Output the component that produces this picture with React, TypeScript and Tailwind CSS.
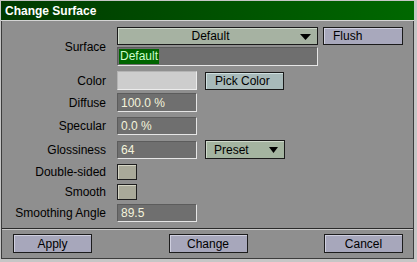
import React from "react";

const font = { fontFamily: '"Liberation Sans", Arial, sans-serif' };

function Label({ children }: { children: React.ReactNode }) {
  return <div className="w-[104px] shrink-0 text-right text-[12px] leading-[14px] text-black">{children}</div>;
}

function Field({ value, h = "h-[19px]" }: { value: string; h?: string }) {
  return (
    <div className={`ml-[11px] w-[80px] ${h} bg-[#6f6f6f] border-t border-l border-[#5c5c5c] border-r border-b border-r-[#e6e6e6] border-b-[#e6e6e6] flex items-center pl-[3px] text-[12px] text-[#f4f4dc]`}>
      {value}
    </div>
  );
}

function Tri({ w = 11, h = 6 }: { w?: number; h?: number }) {
  return (
    <svg width={w} height={h} viewBox={`0 0 ${w} ${h}`}>
      <polygon points={`0,0 ${w},0 ${w / 2},${h}`} fill="#000" />
    </svg>
  );
}

function Check() {
  return (
    <div className="ml-[11px] w-[20px] h-[16px] bg-[#a9a999] border border-[#1e1e1e] shadow-[inset_1px_1px_0_#d4d4c4]" />
  );
}

function Btn({ children }: { children: React.ReactNode }) {
  return (
    <div className="w-[79px] h-[19px] bg-[#a7a7bb] border border-[#1c1c1c] shadow-[inset_1px_1px_0_#cfcfdf] flex items-center justify-center text-[12px] text-black">
      {children}
    </div>
  );
}

export default function App() {
  return (
    <div style={font} className="w-[417px] h-[262px] bg-[#c6c6c6] pl-[1px] pt-[1px] pr-[3px] pb-[3px] flex flex-col">
      <div className="h-[19px] bg-gradient-to-r from-[#003a00] to-[#006800] flex items-center pl-[4px] text-white font-bold text-[12px]">
        Change Surface
      </div>
      <div className="h-[1px] bg-[#d4d4d4]" />
      <div className="flex-1 flex flex-col border-l border-r border-b border-[#3c3c3c]">
        <div className="bg-[#8f8f8f] border-t border-[#8f8f8f] pt-[5px] pb-[6px] border-b border-b-[#2a2a2a] flex flex-col">
          {/* Surface */}
          <div className="flex items-center">
            <Label>Surface</Label>
            <div className="ml-[11px] flex flex-col">
              <div className="w-[201px] h-[18px] bg-[#a6b2a2] border border-[#1a1a1a] shadow-[inset_1px_1px_0_#cfd9cb] flex items-center relative text-[12px] text-black">
                <div className="flex-1 text-center pr-[14px]">Default</div>
                <div className="absolute right-[6px] top-[6px]"><Tri w={11} h={6} /></div>
              </div>
              <div className="mt-[2px] w-[201px] h-[19px] bg-[#6f6f6f] border-t border-l border-[#5c5c5c] border-r border-b border-r-[#e6e6e6] border-b-[#e6e6e6] flex items-center pl-[1px]">
                <span className="bg-[#006400] text-[#ccffcc] text-[12px] leading-[15px] px-[1px]">Default</span>
              </div>
            </div>
            <div className="ml-[5px] self-start w-[80px] h-[18px] bg-[#a8a8bc] border border-[#1a1a1a] shadow-[inset_1px_1px_0_#d0d0e0] flex items-center pl-[9px] text-[12px] text-black">
              Flush
            </div>
          </div>
          {/* Color */}
          <div className="flex items-center mt-[5px]">
            <Label>Color</Label>
            <div className="ml-[11px] w-[80px] h-[19px] bg-[#cdcdcd] border-t border-l border-[#b4b4b4] border-r border-b border-r-[#ececec] border-b-[#ececec]" />
            <div className="ml-[8px] w-[79px] h-[18px] bg-[#a8baba] border border-[#1a1a1a] shadow-[inset_1px_1px_0_#d0e0e0] flex items-center pl-[9px] text-[12px] text-black">
              Pick Color
            </div>
          </div>
          <div className="flex items-center mt-[3px]">
            <Label>Diffuse</Label>
            <Field value="100.0 %" />
          </div>
          <div className="flex items-center mt-[5px]">
            <Label>Specular</Label>
            <Field value="0.0 %" h="h-[18px]" />
          </div>
          <div className="flex items-center mt-[5px]">
            <Label>Glossiness</Label>
            <Field value="64" h="h-[18px]" />
            <div className="ml-[8px] w-[80px] h-[19px] bg-[#a4b4a0] border border-[#1a1a1a] shadow-[inset_1px_1px_0_#cfd9cb] flex items-center pl-[8px] pr-[6px] justify-between text-[12px] text-black">
              <span>Preset</span>
              <Tri w={9} h={6} />
            </div>
          </div>
          <div className="flex items-center mt-[5px]">
            <Label>Double-sided</Label>
            <Check />
          </div>
          <div className="flex items-center mt-[4px]">
            <Label>Smooth</Label>
            <Check />
          </div>
          <div className="flex items-center mt-[4px]">
            <Label>Smoothing Angle</Label>
            <Field value="89.5" h="h-[18px]" />
          </div>
        </div>
        <div className="flex-1 bg-[#8f8f8f] border-t border-[#c8c8c8] flex items-start justify-between pl-[11px] pr-[10px] pt-[4px]">
          <Btn>Apply</Btn>
          <Btn>Change</Btn>
          <Btn>Cancel</Btn>
        </div>
      </div>
    </div>
  );
}
